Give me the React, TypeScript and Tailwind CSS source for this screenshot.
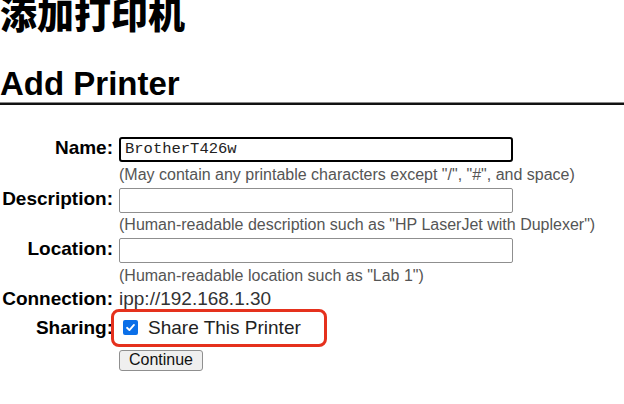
const FieldRow = ({ label, value, hint, focused }: { label: string; value?: string; hint: string; focused?: boolean }) => {
  return (
    <>
      <div className="text-right font-bold text-[19px] leading-[22px] text-black">{label}</div>
      <div className="flex flex-col">
        <div
          className={
            focused
              ? "w-[394px] h-[25px] border-2 border-black rounded-[3px] bg-white flex items-center px-[4px]"
              : "w-[394px] h-[25px] border border-[#8f8f8f] rounded-[2px] bg-white flex items-center px-[5px]"
          }
        >
          <span className="font-['Liberation_Mono',monospace] text-[15.5px] text-[#222]">{value}</span>
        </div>
        <div className="h-[25.5px] flex items-center text-[16px] text-[#555] whitespace-nowrap">{hint}</div>
      </div>
    </>
  );
};

export default function App() {
  return (
    <div className="w-[624px] h-[404px] overflow-hidden bg-white font-['Liberation_Sans','Noto_Sans_CJK_SC',sans-serif] text-black">
      <h1 className="text-[37px] leading-[37px] font-black -mt-[5px] font-['Noto_Sans_CJK_SC',sans-serif]">添加打印机</h1>
      <h2 className="text-[33px] leading-[33px] font-bold mt-[35px]">Add Printer</h2>
      <div className="mt-[2px]">
        <div className="h-[1px] bg-[#888]" />
        <div className="h-[2px] bg-[#111]" />
      </div>

      <div className="grid grid-cols-[113px_1fr] gap-x-[6px] mt-[32px]">
        <FieldRow label="Name:" value="BrotherT426w" focused hint={'(May contain any printable characters except "/", "#", and space)'} />
        <FieldRow label="Description:" hint={'(Human-readable description such as "HP LaserJet with Duplexer")'} />
        <FieldRow label="Location:" hint={'(Human-readable location such as "Lab 1")'} />

        <div className="text-right font-bold text-[19px] leading-[20px]">Connection:</div>
        <div className="text-[19px] leading-[20px] text-[#333]">ipp://192.168.1.30</div>

        <div className="text-right font-bold text-[19px] leading-[22px] self-center">Sharing:</div>
        <div className="-ml-[8px] w-[216px] h-[38px] border-[3px] border-[#e5311d] rounded-[8px] flex items-center pl-[9px] gap-[10px]">
          <div className="w-[15px] h-[15px] rounded-[2px] bg-[#0b6fe8] flex items-center justify-center">
            <svg width="11" height="11" viewBox="0 0 12 12" fill="none">
              <path d="M2.2 6.3 L4.8 8.8 L9.8 3.2" stroke="white" strokeWidth="2" strokeLinecap="round" strokeLinejoin="round" />
            </svg>
          </div>
          <span className="text-[19px] text-[#222] leading-[22px]">Share This Printer</span>
        </div>

        <div />
        <div className="pt-[3px]">
          <button className="w-[84px] h-[21px] border border-[#8f8f8f] rounded-[3px] bg-[#efefef] text-[16px] leading-[18px] text-[#111] flex items-center justify-center">
            Continue
          </button>
        </div>
      </div>
    </div>
  );
}
